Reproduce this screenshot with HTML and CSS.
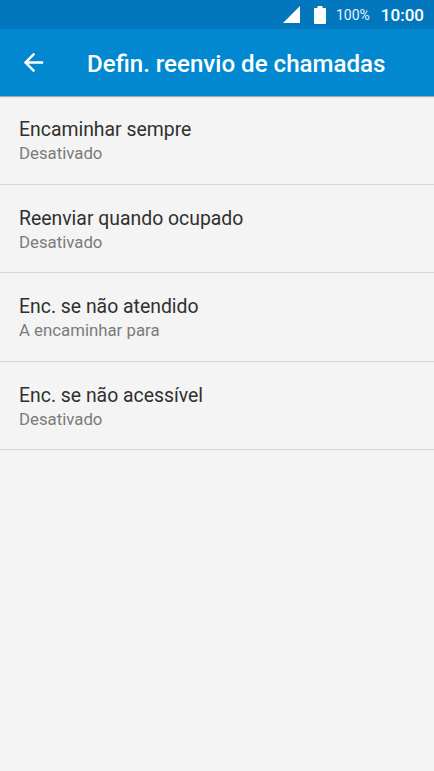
FILE: index.html
```html
<!DOCTYPE html>
<html lang="pt">
<head>
    <meta charset="UTF-8">
    <title>Defin. reenvio de chamadas</title>
    <link rel="stylesheet" href="styles.css">
</head>
<body>
    <div class="status-bar">
        <svg class="signal" viewBox="0 0 17 17">
            <path d="M17 0v17H0z"/>
        </svg>
        <svg class="battery" viewBox="0 0 12 18">
            <path d="M3.5 0h5v2H11a1 1 0 0 1 1 1v14a1 1 0 0 1-1 1H1a1 1 0 0 1-1-1V3a1 1 0 0 1 1-1h2.5z"/>
        </svg>
        <span class="percent">100%</span>
        <span class="clock">10:00</span>
    </div>

    <header class="app-bar">
        <svg class="back" viewBox="0 0 24 24">
            <path d="M20 11H7.83l5.59-5.59L12 4l-8 8 8 8 1.41-1.41L7.83 13H20v-2z"/>
        </svg>
        <h1>Defin. reenvio de chamadas</h1>
    </header>

    <ul class="settings">
        <li class="item">
            <div class="title">Encaminhar sempre</div>
            <div class="summary">Desativado</div>
        </li>
        <li class="item">
            <div class="title">Reenviar quando ocupado</div>
            <div class="summary">Desativado</div>
        </li>
        <li class="item">
            <div class="title">Enc. se não atendido</div>
            <div class="summary">A encaminhar para</div>
        </li>
        <li class="item">
            <div class="title">Enc. se não acessível</div>
            <div class="summary">Desativado</div>
        </li>
    </ul>
</body>
</html>
```

FILE: styles.css
```css
* {
    box-sizing: border-box;
}
body {
    margin: 0;
    min-height: 100vh;
    background-color: #f4f4f4;
    font-family: Roboto, sans-serif;
}

/* Status bar */
.status-bar {
    display: flex;
    align-items: center;
    justify-content: flex-end;
    height: 29px;
    padding-right: 10px;
    background-color: #0277bd;
    color: #fff;
}
.status-bar svg {
    fill: #fff;
}
.signal {
    width: 17px;
    height: 17px;
    margin-right: 14px;
}
.battery {
    width: 12px;
    height: 18px;
    margin-right: 10px;
}
.percent {
    font-size: 14px;
    margin-right: 11px;
    color: #e6f2fa;
}
.clock {
    font-size: 17px;
    font-weight: 500;
}

/* App bar */
.app-bar {
    display: flex;
    align-items: center;
    height: 67px;
    padding-left: 19px;
    background-color: #0288d1;
    box-shadow: 0 1px 1px rgba(0,0,0,0.3);
    color: #fff;
}
.back {
    width: 29px;
    height: 29px;
    fill: #fff;
}
.app-bar h1 {
    margin: 0 0 0 39px;
    padding-top: 2px;
    font-size: 24.1px;
    font-weight: 500;
    white-space: nowrap;
}

/* Settings list */
.settings {
    margin: 0;
    padding: 0;
    list-style: none;
}
.item {
    height: 88.6px;
    padding: 21px 19px 0;
    border-bottom: 1px solid #d6d6d6;
}
.title {
    color: #303030;
    font-size: 19.4px;
    line-height: 25px;
}
.summary {
    color: #7b7b7b;
    font-size: 16.8px;
    line-height: 23px;
}
```
